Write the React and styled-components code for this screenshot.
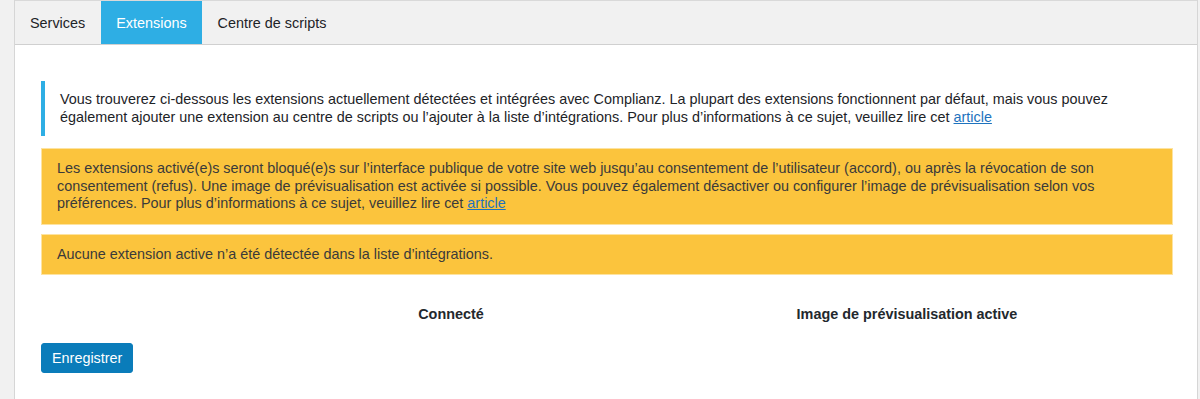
import React from 'react';
import styled, {createGlobalStyle} from "styled-components";

const GlobalStyle = createGlobalStyle`
  html, body {
    margin: 0;
    padding: 0;
    background: #f1f1f1;
    font-family: "Liberation Sans", Arial, sans-serif;
    font-size: 14.4px;
    color: #1d2327;
  }
`

const Page = styled.div`
  padding: 0 2px 0 14px;
  height: 399px;
  box-sizing: border-box;
`

const Panel = styled.div`
  background: #fff;
  border-left: 1px solid #d6d6d6;
  border-right: 1px solid #d6d6d6;
  height: 100%;
`

const TabBar = styled.nav`
  display: flex;
  height: 43px;
  background: #f1f1f1;
  border-top: 1px solid #d9d9d9;
  border-bottom: 1px solid #d0d0d0;
`

const Tab = styled.div`
  display: flex;
  align-items: center;
  padding: 0 15px;
  font-size: 14.4px;
  color: ${props => props.active ? "#fff" : "#1d2327"};
  background: ${props => props.active ? "#2eaee4" : "transparent"};
  margin-right: 1px;
`

const Content = styled.div`
  padding: 36px 24px 0 26px;
`

const InfoNotice = styled.div`
  border-left: 4px solid #2eaee4;
  padding: 10px 15px;
  line-height: 17.5px;
  color: #1d2327;
  margin-bottom: 12px;
`

const WarningBox = styled.div`
  background: #fbc43d;
  border: 1px solid #fde3a0;
  padding: 11px 15px 11px;
  line-height: 17.5px;
  color: #3a3a3a;
  margin-bottom: 9px;
`

const Link = styled.a`
  color: #1e73be;
  text-decoration: underline;
`

const HeaderRow = styled.div`
  display: grid;
  grid-template-columns: 182px 456px 456px 1fr;
  margin-top: 29px;
  height: 20px;
  align-items: center;
`

const ColHeader = styled.div`
  text-align: center;
  font-weight: bold;
  font-size: 14.4px;
  color: #23282d;
`

const SaveButton = styled.button`
  margin-top: 19px;
  height: 30px;
  padding: 0 10px;
  background: #0a7cba;
  border: 1px solid #0a7cba;
  border-radius: 3px;
  color: #fff;
  font-family: "Liberation Sans", Arial, sans-serif;
  font-size: 14.4px;
  cursor: pointer;
`

const App = () => {
    return (
        <>
            <GlobalStyle/>
            <Page>
                <Panel>
                    <TabBar>
                        <Tab>Services</Tab>
                        <Tab active>Extensions</Tab>
                        <Tab>Centre de scripts</Tab>
                    </TabBar>
                    <Content>
                        <InfoNotice>
                            Vous trouverez ci-dessous les extensions actuellement détectées et intégrées avec Complianz. La plupart des extensions fonctionnent par défaut, mais vous pouvez également ajouter une extension au centre de scripts ou l’ajouter à la liste d’intégrations. Pour plus d’informations à ce sujet, veuillez lire cet <Link href="#">article</Link>
                        </InfoNotice>
                        <WarningBox>
                            Les extensions activé(e)s seront bloqué(e)s sur l’interface publique de votre site web jusqu’au consentement de l’utilisateur (accord), ou après la révocation de son consentement (refus). Une image de prévisualisation est activée si possible. Vous pouvez également désactiver ou configurer l’image de prévisualisation selon vos préférences. Pour plus d’informations à ce sujet, veuillez lire cet <Link href="#">article</Link>
                        </WarningBox>
                        <WarningBox>
                            Aucune extension active n’a été détectée dans la liste d’intégrations.
                        </WarningBox>
                        <HeaderRow>
                            <div/>
                            <ColHeader>Connecté</ColHeader>
                            <ColHeader>Image de prévisualisation active</ColHeader>
                        </HeaderRow>
                        <SaveButton>Enregistrer</SaveButton>
                    </Content>
                </Panel>
            </Page>
        </>
    );
};

export default App;
